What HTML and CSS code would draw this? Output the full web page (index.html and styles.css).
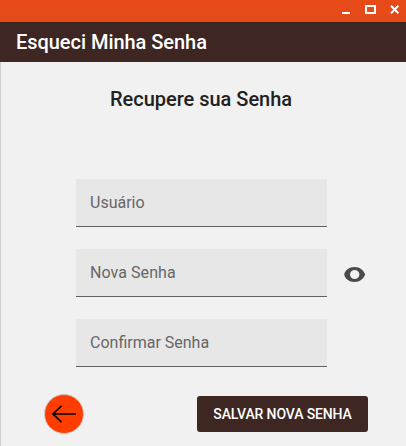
FILE: index.html
```html
<!DOCTYPE html>
<html lang="pt-BR">
<head>
<meta charset="utf-8">
<title>Esqueci Minha Senha</title>
<link rel="stylesheet" href="styles.css">
</head>
<body>
<div class="window">
  <div class="titlebar">
    <svg class="controls" width="57" height="10" viewBox="0 0 57 10">
      <path class="fill" d="M0 7h8v2H0z"/>
      <path class="line" d="M24 1h9v7h-9z"/>
      <path class="line" d="M49 .8l7.400 7.400M56.400 .8l-7.400 7.400"/>
    </svg>
  </div>
  <header class="appbar">Esqueci Minha Senha</header>
  <main class="content">
    <h1 class="heading">Recupere sua Senha</h1>
    <form class="fields">
      <input class="field" type="text" placeholder="Usuário">
      <div class="row">
        <input class="field" type="password" placeholder="Nova Senha">
        <svg class="eye" width="22" height="16" viewBox="0 0 22 16">
          <path fill-rule="evenodd" d="M.2 7.500C.8 3.500 5 0 10.600 0S19.500 3.300 21.200 7.500C19.500 11.700 16 15 10.600 15S.8 11.500 .2 7.500zM10.700 2.900A4.700 4.600 0 1 0 10.700 12.100A4.700 4.600 0 1 0 10.700 2.900z"/>
        </svg>
      </div>
      <input class="field" type="password" placeholder="Confirmar Senha">
    </form>
    <div class="actions">
      <button class="back" type="button" aria-label="Voltar">
        <svg width="24" height="18" viewBox="0 0 24 18"><path d="M24 9H1M9.500 .8L1 9l8.500 8.200"/></svg>
      </button>
      <button class="save" type="button">SALVAR NOVA SENHA</button>
    </div>
  </main>
</div>
</body>
</html>
```
FILE: styles.css
```css
* { box-sizing: border-box; }
body {
  margin: 0;
  font-family: Roboto, sans-serif;
}
.window {
  display: flex;
  flex-direction: column;
  width: 406px;
  height: 446px;
  background: #f1f1f1;
  overflow: hidden;
}
.titlebar {
  display: flex;
  justify-content: flex-end;
  height: 22px;
  padding: 5px 7px 0 0;
  background: #e64a19;
}
.controls .fill { fill: #fff; }
.controls .line { fill: none; stroke: #fff; stroke-width: 2; }
.appbar {
  height: 40px;
  padding-left: 16px;
  background: #3e2723;
  color: #fff;
  font-size: 20px;
  font-weight: 500;
  letter-spacing: -0.04px;
  line-height: 40px;
}
.content {
  flex: 1;
  border-left: 1px solid #d2d2d2;
}
.heading {
  margin: 25px 0 0 109px;
  color: #212121;
  font-size: 20px;
  font-weight: 500;
  letter-spacing: -0.02px;
  line-height: 24px;
}
.fields {
  display: flex;
  flex-direction: column;
  gap: 22px;
  margin: 68px 0 0 75px;
}
.row { display: flex; gap: 17px; }
.field {
  width: 251px;
  height: 48px;
  padding: 0 14px;
  border: 0;
  border-bottom: 1px solid #616161;
  border-radius: 0;
  background: #e7e7e7;
  font-family: inherit;
  font-size: 16px;
}
.field::placeholder { color: #666; opacity: 1; }
.row .field { letter-spacing: 0.06px; }
.eye { margin-top: 18px; fill: #4a4a4a; }
.actions {
  display: flex;
  justify-content: space-between;
  align-items: center;
  margin: 27px 38px 0 43px;
}
button { border: 0; padding: 0; font-family: inherit; }
.back {
  display: flex;
  align-items: center;
  justify-content: center;
  width: 40px;
  height: 40px;
  border: 1px solid #d0c4c0;
  border-radius: 50%;
  background: #ff3d00;
}
.back svg { fill: none; stroke: #000; stroke-width: 1.600; }
.save {
  width: 171px;
  height: 36px;
  border-radius: 3px;
  background: #3e2723;
  color: #fff;
  font-size: 14px;
  font-weight: 500;
  letter-spacing: -0.13px;
}
```
